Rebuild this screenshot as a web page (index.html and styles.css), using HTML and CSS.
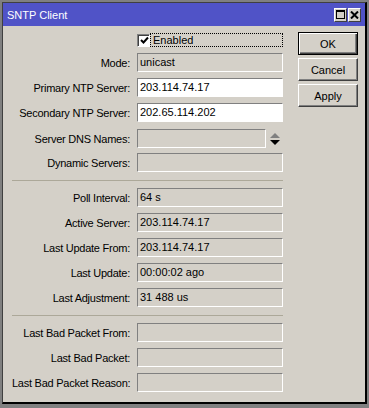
FILE: index.html
```html
<!DOCTYPE html>
<html lang="en">
<head>
    <meta charset="UTF-8">
    <title>SNTP Client</title>
    <link rel="stylesheet" href="styles.css">
</head>
<body>

<div class="window">
    <div class="titlebar">
        <span class="title">SNTP Client</span>
        <div class="title-btns">
            <span class="tbtn">
                <svg width="9" height="9" viewBox="0 0 9 9"><rect x="0.5" y="0.5" width="8" height="8" fill="none" stroke="#000"/><rect x="0" y="0" width="9" height="2" fill="#000"/></svg>
            </span>
            <span class="tbtn">
                <svg width="9" height="8" viewBox="0 0 9 8"><path d="M1 0.5 L8 7.5 M8 0.5 L1 7.5" stroke="#000" stroke-width="2"/></svg>
            </span>
        </div>
    </div>

    <div class="body">
        <div class="form">
            <div class="row row-check">
                <div class="label"></div>
                <span class="checkbox">
                    <svg width="9" height="9" viewBox="0 0 9 9"><path d="M1 4 L3.5 6.5 L8 1.5" fill="none" stroke="#000" stroke-width="2"/></svg>
                </span>
                <span class="focus">Enabled</span>
            </div>
            <div class="row"><div class="label">Mode:</div><div class="field">unicast</div></div>
            <div class="row"><div class="label">Primary NTP Server:</div><div class="field edit">203.114.74.17</div></div>
            <div class="row"><div class="label">Secondary NTP Server:</div><div class="field edit">202.65.114.202</div></div>
            <div class="row row-dns">
                <div class="label">Server DNS Names:</div>
                <div class="field short"></div>
                <svg class="spin" width="10" height="12" viewBox="0 0 10 12"><path d="M5 0 L10 5 L0 5 Z" fill="#808080"/><path d="M0 7 L10 7 L5 12 Z" fill="#000"/></svg>
            </div>
            <div class="row"><div class="label">Dynamic Servers:</div><div class="field"></div></div>

            <div class="sep"></div>

            <div class="row"><div class="label">Poll Interval:</div><div class="field">64 s</div></div>
            <div class="row"><div class="label">Active Server:</div><div class="field">203.114.74.17</div></div>
            <div class="row"><div class="label">Last Update From:</div><div class="field">203.114.74.17</div></div>
            <div class="row"><div class="label">Last Update:</div><div class="field">00:00:02 ago</div></div>
            <div class="row"><div class="label">Last Adjustment:</div><div class="field">31 488 us</div></div>

            <div class="sep"></div>

            <div class="row"><div class="label">Last Bad Packet From:</div><div class="field"></div></div>
            <div class="row"><div class="label">Last Bad Packet:</div><div class="field"></div></div>
            <div class="row"><div class="label">Last Bad Packet Reason:</div><div class="field"></div></div>
        </div>

        <div class="buttons">
            <button class="btn default">OK</button>
            <button class="btn">Cancel</button>
            <button class="btn">Apply</button>
        </div>
    </div>
</div>

</body>
</html>
```

FILE: styles.css
```css
body {
    margin: 0;
    padding: 2px 2px 4px 2px;
    background-color: #808080;
    font-family: "Liberation Sans", Arial, sans-serif;
    font-size: 11px;
    color: #000;
}

.window {
    background-color: #d4d0c8;
    border-left: 1px solid #404040;
    border-top: 1px solid #404040;
    border-right: 2px solid #000;
    border-bottom: 2px solid #000;
    height: 399px;
}

.titlebar {
    height: 23px;
    background-color: #5053c7;
    color: #fff;
    display: flex;
    align-items: center;
    padding-left: 4px;
}

.title-btns {
    margin-left: auto;
    margin-right: 4px;
    display: flex;
    gap: 1px;
}

.tbtn {
    width: 13px;
    height: 14px;
    box-sizing: border-box;
    background-color: #d4d0c8;
    border: 1px solid;
    border-color: #fff #404040 #404040 #fff;
    display: flex;
    align-items: center;
    justify-content: center;
}

.body {
    display: flex;
}

.form {
    display: flex;
    flex-direction: column;
    gap: 6px;
    padding: 7px 0 0 9px;
    width: 271px;
}

.row {
    display: flex;
    align-items: center;
    gap: 7px;
    height: 19px;
}

.row-check {
    height: 14px;
    gap: 0;
}

.row-check .label {
    margin-right: 7px;
}

.row-dns {
    margin-top: 1px;
    margin-bottom: -1px;
}

.label {
    width: 118px;
    flex-shrink: 0;
    text-align: right;
    white-space: nowrap;
    letter-spacing: -0.25px;
}

.field {
    width: 146px;
    height: 19px;
    box-sizing: border-box;
    border: 1px solid;
    border-color: #808080 #fff #fff #808080;
    padding-left: 2px;
    line-height: 17px;
    white-space: nowrap;
}

.field.edit {
    background-color: #fff;
}

.field.short {
    width: 129px;
}

.spin {
    margin-left: -3px;
}

.checkbox {
    width: 13px;
    height: 13px;
    box-sizing: border-box;
    background-color: #fff;
    border: 1px solid;
    border-color: #808080 #fff #fff #808080;
    box-shadow: inset 1px 1px #404040;
    display: flex;
    align-items: center;
    justify-content: center;
    padding: 1px 0 0 1px;
}

.focus {
    width: 133px;
    height: 14px;
    box-sizing: border-box;
    border: 1px dotted #000;
    padding-left: 2px;
    line-height: 12px;
}

.sep {
    height: 1px;
    background-color: #aca899;
    margin: 2px 0 1px 0;
}

.buttons {
    display: flex;
    flex-direction: column;
    gap: 3px;
    margin-left: 15px;
    padding-top: 6px;
}

.btn {
    width: 60px;
    height: 23px;
    box-sizing: border-box;
    background-color: #d4d0c8;
    border: 1px solid;
    border-color: #fff #404040 #404040 #fff;
    box-shadow: inset -1px -1px #808080;
    font-family: inherit;
    font-size: 11px;
    color: #000;
    padding: 0;
}

.btn.default {
    border: 1px solid #000;
    box-shadow: inset 1px 1px #fff, inset -1px -1px #404040, inset -2px -2px #808080;
}
```
